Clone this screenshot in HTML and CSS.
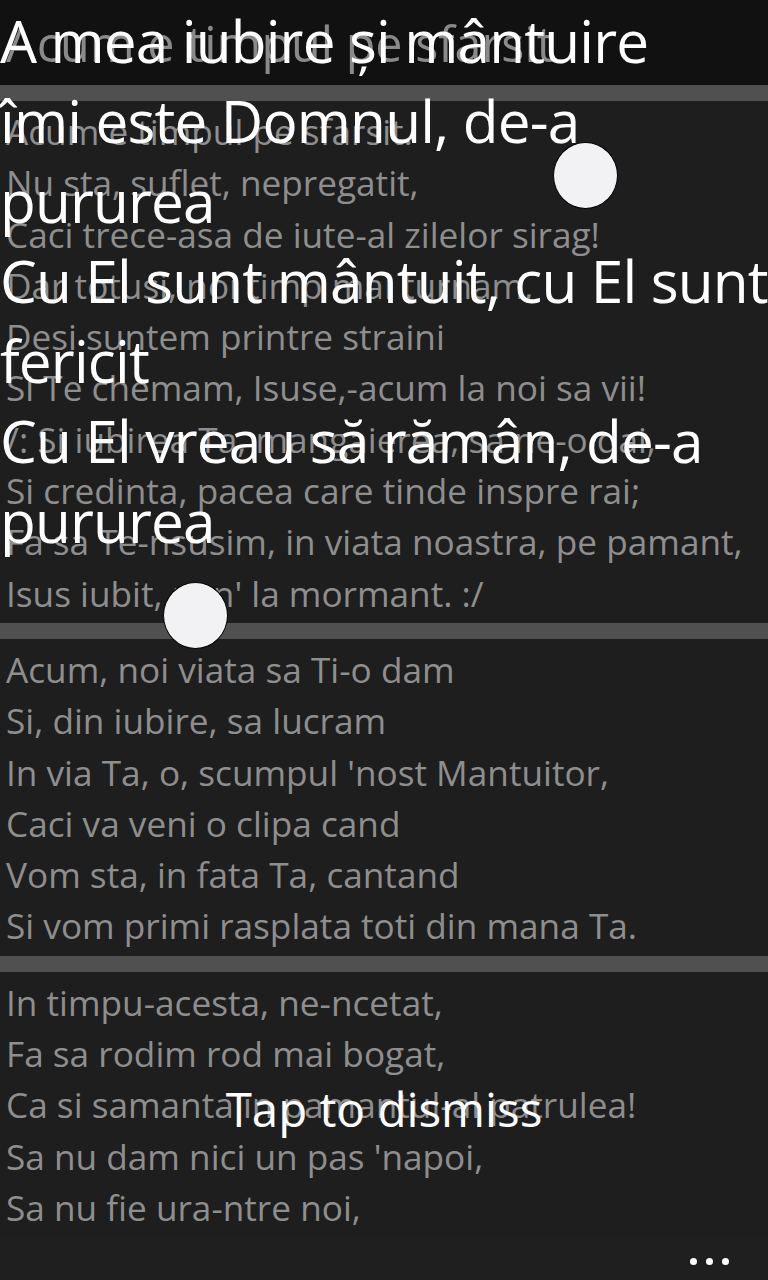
FILE: index.html
```html
<!DOCTYPE html>
<html lang="ro">
<head>
<meta charset="utf-8">
<title>Acum e timpul pe sfarsit</title>
<link rel="stylesheet" href="styles.css">
</head>
<body>
<div class="app">
  <header class="titlebar">
    <h1 class="song-title">Acum e timpul pe sfarsit</h1>
  </header>
  <main class="lyrics">
    <div class="divider"></div>
    <section class="stanza">
      <p>Acum e timpul pe sfarsit.</p>
      <p>Nu sta, suflet, nepregatit,</p>
      <p>Caci trece-asa de iute-al zilelor sirag!</p>
      <p>Dar totusi, noi timp mai turnam,</p>
      <p>Desi suntem printre straini</p>
      <p>Si Te chemam, Isuse,-acum la noi sa vii!</p>
      <p>/: Si iubirea Ta, mangaierea, sa ne-o dai,</p>
      <p>Si credinta, pacea care tinde inspre rai;</p>
      <p>Fa sa Te-nsusim, in viata noastra, pe pamant,</p>
      <p>Isus iubit, pan' la mormant. :/</p>
    </section>
    <div class="divider"></div>
    <section class="stanza">
      <p>Acum, noi viata sa Ti-o dam</p>
      <p>Si, din iubire, sa lucram</p>
      <p>In via Ta, o, scumpul 'nost Mantuitor,</p>
      <p>Caci va veni o clipa cand</p>
      <p>Vom sta, in fata Ta, cantand</p>
      <p>Si vom primi rasplata toti din mana Ta.</p>
    </section>
    <div class="divider"></div>
    <section class="stanza">
      <p>In timpu-acesta, ne-ncetat,</p>
      <p>Fa sa rodim rod mai bogat,</p>
      <p>Ca si samanta in pamantul-al patrulea!</p>
      <p>Sa nu dam nici un pas 'napoi,</p>
      <p>Sa nu fie ura-ntre noi,</p>
    </section>
  </main>
  <footer class="appbar">
    <span class="more" aria-label="more"><i></i><i></i><i></i></span>
  </footer>
</div>

<div class="overlay">
  <p class="chorus">A mea iubire şi mântuire<br>îmi este Domnul, de-a<br>pururea<br>Cu El sunt mântuit, cu El sunt<br>fericit<br>Cu El vreau să rămân, de-a<br>pururea</p>
  <span class="touch touch-a"></span>
  <span class="touch touch-b"></span>
  <p class="dismiss">Tap to dismiss</p>
</div>
</body>
</html>
```
FILE: styles.css
```css
html, body {
  margin: 0;
  padding: 0;
}

body {
  width: 768px;
  height: 1280px;
  overflow: hidden;
  background: #1e1e1e;
  font-family: "Open Sans", "Noto Sans", sans-serif;
  position: relative;
}

.app {
  display: flex;
  flex-direction: column;
  height: 1280px;
}

.titlebar {
  height: 85px;
  background: #111111;
  display: flex;
  align-items: center;
  padding-left: 6px;
  flex: none;
}

.song-title {
  margin: 0;
  font-weight: 400;
  font-size: 48.5px;
  line-height: 60px;
  color: #8a8a8a;
  white-space: nowrap;
}

.lyrics {
  flex: 1;
  display: flex;
  flex-direction: column;
}

.divider {
  height: 16px;
  background: #505050;
  flex: none;
}

.stanza {
  padding: 5px 0 4px 6px;
}

.stanza p {
  margin: 0;
  font-size: 35.2px;
  line-height: 51.3px;
  color: #8e8e8e;
  white-space: nowrap;
}

.appbar {
  height: 48px;
  flex: none;
  background: #1f1f1f;
  display: flex;
  justify-content: flex-end;
  align-items: center;
  padding-right: 39px;
}

.more {
  display: flex;
  gap: 9px;
}

.more i {
  width: 7px;
  height: 7px;
  border-radius: 50%;
  background: #ffffff;
}

.overlay {
  position: absolute;
  inset: 0;
}

.chorus {
  margin: 0;
  font-size: 58.5px;
  line-height: 80px;
  letter-spacing: -0.85px;
  color: #ffffff;
  white-space: nowrap;
}

.touch {
  position: absolute;
  width: 63px;
  height: 65px;
  border-radius: 50%;
  background: #f2f2f4;
  border: 1px solid #000;
}

.touch-a {
  left: 553px;
  top: 142px;
}

.touch-b {
  left: 163px;
  top: 582px;
}

.dismiss {
  position: absolute;
  left: 0;
  right: 0;
  top: 1079px;
  margin: 0;
  text-align: center;
  font-size: 47.5px;
  line-height: 60px;
  color: #ffffff;
}
```
